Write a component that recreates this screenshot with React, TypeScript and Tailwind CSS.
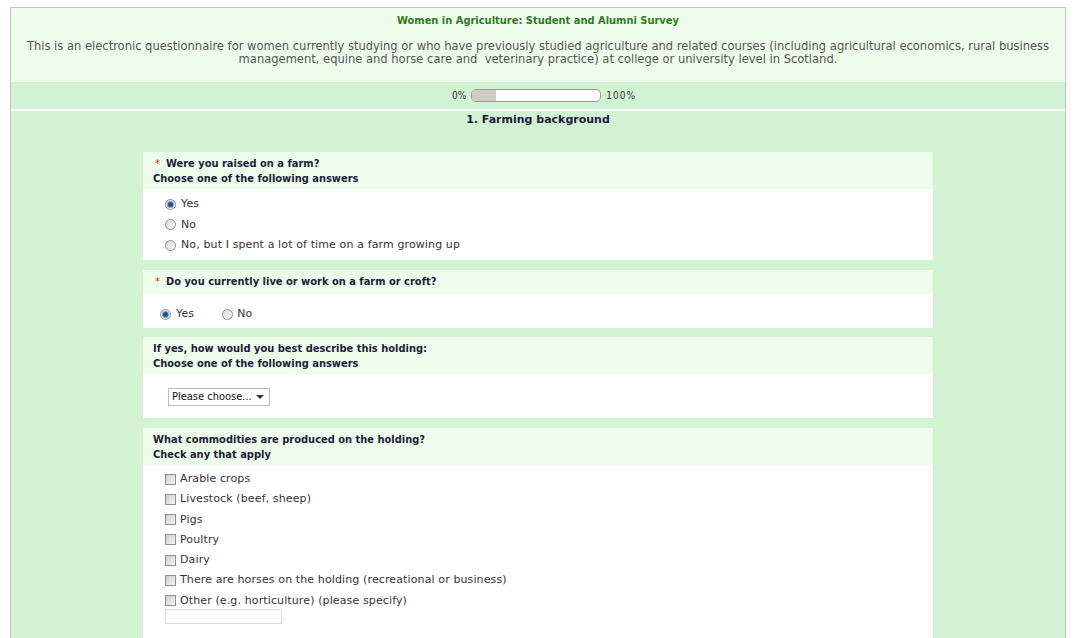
import React from "react";

const tahoma = { fontFamily: '"DejaVu Sans Condensed", "DejaVu Sans", sans-serif' };
const verdana = { fontFamily: '"DejaVu Sans", Verdana, sans-serif' };

function Radio({ checked }: { checked?: boolean }) {
  return (
    <span className="relative inline-block h-[11px] w-[11px] shrink-0 rounded-full border border-[#8e8f8f] bg-gradient-to-br from-[#dcdcdc] to-[#f7f7f7]">
      {checked && (
        <span className="absolute left-[2px] top-[2px] h-[5px] w-[5px] rounded-full bg-[#1f4f8f] ring-1 ring-[#7fa4d0]" />
      )}
    </span>
  );
}

function Checkbox() {
  return (
    <span className="inline-block h-[11px] w-[11px] shrink-0 border border-[#8f8f8f] bg-gradient-to-br from-[#cfcfcf] to-[#f4f4f4]" />
  );
}

function QHeader({ req, title, sub }: { req?: boolean; title: string; sub?: string }) {
  return (
    <div
      className={
        sub
          ? "bg-[#eefdeb] px-[10px] pt-[4px] pb-[3px] text-[11px] font-bold leading-[15px] text-[#1c1c3a]"
          : "bg-[#eefdeb] px-[10px] pt-[4px] pb-[5px] text-[11px] font-bold leading-[15px] text-[#1c1c3a]"
      }
      style={tahoma}
    >
      <div className="flex">
        {req && <span className="mr-[6px] ml-[2px] font-normal text-[#c0392b]">*</span>}
        <span>{title}</span>
      </div>
      {sub && <div>{sub}</div>}
    </div>
  );
}

export default function App() {
  return (
    <div className="min-h-screen bg-white pt-[7px] pl-[10px] pr-[9px]">
      <div className="border-l border-r border-t border-[#c4c4c4]">
        <div className="bg-[#eefdeb] pt-[6px] pb-[17px] text-center" style={tahoma}>
          <div className="text-[11px] font-bold leading-[14px] text-[#2d7a1f]">
            Women in Agriculture: Student and Alumni Survey
          </div>
          <div className="mx-auto mt-[11px] text-[12.8px] leading-[13px] text-[#555]">
            This is an electronic questionnaire for women currently studying or who have previously studied agriculture and related courses (including agricultural economics, rural business
            <br />
            management, equine and horse care and&nbsp; veterinary practice) at college or university level in Scotland.
          </div>
        </div>
        <div className="flex h-[27px] items-center justify-center gap-[5px] bg-[#d3f1d3] pl-[12px] text-[10px] text-[#333]" style={tahoma}>
          <span>0%</span>
          <div className="flex h-[13px] w-[130px] overflow-hidden rounded-[5px] border border-[#999] bg-white">
            <div className="h-full w-[24px] bg-[#cfccc4]" />
          </div>
          <span className="tracking-[1px]">100%</span>
        </div>
        <div className="h-[2px] bg-white" />
        <div className="bg-[#d3f1d3] pb-[40px]">
          <div className="pt-[2px] text-center text-[11px] font-bold leading-[14px] text-[#1c1c3a]" style={verdana}>
            1. Farming background
          </div>
          <div className="mx-auto mt-[25px] flex w-[790px] flex-col gap-[10px]">
            {/* Q1 */}
            <div>
              <QHeader req title="Were you raised on a farm?" sub="Choose one of the following answers" />
              <div className="flex flex-col gap-[6.5px] bg-white pt-[8px] pb-[8px] pl-[22px] text-[11px] leading-[14px] tracking-[0.12px] text-[#333]" style={verdana}>
                {[
                  ["Yes", true],
                  ["No", false],
                  ["No, but I spent a lot of time on a farm growing up", false],
                ].map(([t, c]) => (
                  <div key={t as string} className="flex items-center gap-[5px]">
                    <Radio checked={c as boolean} />
                    <span>{t as string}</span>
                  </div>
                ))}
              </div>
            </div>
            {/* Q2 */}
            <div>
              <QHeader req title="Do you currently live or work on a farm or croft?" />
              <div className="flex items-center bg-white pt-[13px] pb-[7px] pl-[17px] text-[11px] leading-[14px] tracking-[0.12px] text-[#333]" style={verdana}>
                <div className="flex items-center gap-[5px]">
                  <Radio checked />
                  <span>Yes</span>
                </div>
                <div className="ml-[28px] flex items-center gap-[4px]">
                  <Radio />
                  <span>No</span>
                </div>
              </div>
            </div>
            {/* Q3 */}
            <div className="-mt-px">
              <QHeader title="If yes, how would you best describe this holding:" sub="Choose one of the following answers" />
              <div className="bg-white pt-[14px] pb-[12px] pl-[25px]">
                <div className="flex h-[18px] w-[102px] items-center justify-between border border-[#bcbcbc] bg-white pl-[3px] pr-[5px] text-[11px] text-[#111]" style={tahoma}>
                  <span>Please choose...</span>
                  <span className="h-0 w-0 border-l-[4px] border-r-[4px] border-t-[4px] border-l-transparent border-r-transparent border-t-[#333]" />
                </div>
              </div>
            </div>
            {/* Q4 */}
            <div>
              <QHeader title="What commodities are produced on the holding?" sub="Check any that apply" />
              <div className="flex flex-col gap-[6.3px] bg-white pt-[7px] pb-[20px] pl-[22px] text-[11px] leading-[14px] tracking-[0.12px] text-[#333]" style={verdana}>
                {[
                  "Arable crops",
                  "Livestock (beef, sheep)",
                  "Pigs",
                  "Poultry",
                  "Dairy",
                  "There are horses on the holding (recreational or business)",
                  "Other (e.g. horticulture) (please specify)",
                ].map((t) => (
                  <div key={t} className="flex items-center gap-[4px]">
                    <Checkbox />
                    <span>{t}</span>
                  </div>
                ))}
                <div className="-mt-[5px] h-[15px] w-[117px] border border-[#dcdcdc] bg-white" />
              </div>
            </div>
          </div>
        </div>
      </div>
    </div>
  );
}
